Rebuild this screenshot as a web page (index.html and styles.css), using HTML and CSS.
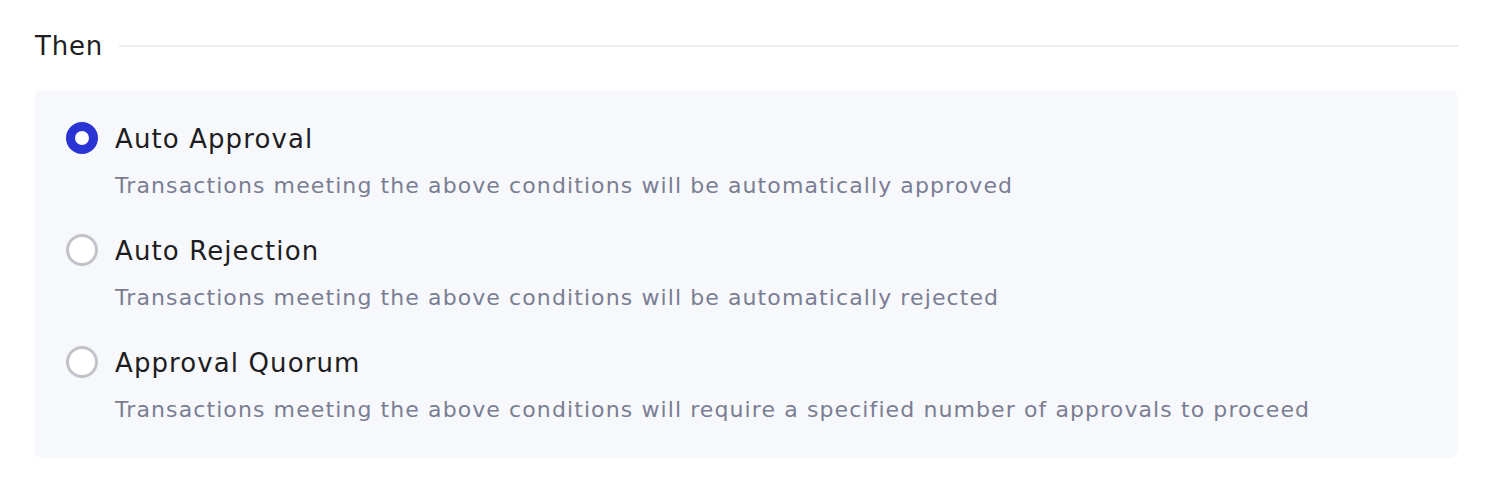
FILE: index.html
```html
<!DOCTYPE html>
<html>
<head>
<meta charset="utf-8">
<link rel="stylesheet" href="styles.css">
</head>
<body>
<section class="section">
  <div class="section-head">
    <h2 class="section-title">Then</h2>
    <div class="section-rule"></div>
  </div>
  <div class="panel">
    <label class="option">
      <span class="radio radio-checked"></span>
      <span class="option-text">
        <span class="option-title">Auto Approval</span>
        <span class="option-desc">Transactions meeting the above conditions will be automatically approved</span>
      </span>
    </label>
    <label class="option">
      <span class="radio"></span>
      <span class="option-text">
        <span class="option-title">Auto Rejection</span>
        <span class="option-desc">Transactions meeting the above conditions will be automatically rejected</span>
      </span>
    </label>
    <label class="option">
      <span class="radio"></span>
      <span class="option-text">
        <span class="option-title">Approval Quorum</span>
        <span class="option-desc">Transactions meeting the above conditions will require a specified number of approvals to proceed</span>
      </span>
    </label>
  </div>
</section>
</body>
</html>
```
FILE: styles.css
```css
html, body {
  margin: 0;
  padding: 0;
  background: #ffffff;
}
body {
  font-family: "DejaVu Sans", "Liberation Sans", sans-serif;
  color: #1d1d22;
}
.section {
  padding: 26px 30px 0 34px;
}
.section-head {
  display: flex;
  align-items: center;
  gap: 16px;
  height: 40px;
}
.section-title {
  margin: 0 0 0 1px;
  font-size: 26px;
  font-weight: 400;
  letter-spacing: 0.8px;
  line-height: 40px;
  color: #1d1d22;
}
.section-rule {
  flex: 1;
  height: 2px;
  background: #ececf1;
}
.panel {
  margin-top: 24px;
  background: #f7f8fc;
  border-radius: 8px;
  padding: 31px 32px 32px 32px;
  display: flex;
  flex-direction: column;
  gap: 31px;
}
.option {
  display: flex;
  gap: 17px;
  align-items: flex-start;
}
.radio {
  flex: none;
  box-sizing: border-box;
  width: 32px;
  height: 32px;
  margin-top: 1px;
  border-radius: 50%;
  border: 3px solid #c2c3ca;
  background: #ffffff;
}
.radio-checked {
  border: 9px solid #2a34d4;
}
.option-text {
  display: flex;
  flex-direction: column;
  gap: 13px;
}
.option-title {
  font-size: 26px;
  letter-spacing: 1.1px;
  line-height: 36px;
  color: #1d1d22;
}
.option-desc {
  font-size: 22px;
  letter-spacing: 1.1px;
  line-height: 32px;
  color: #7a7e93;
}
```
